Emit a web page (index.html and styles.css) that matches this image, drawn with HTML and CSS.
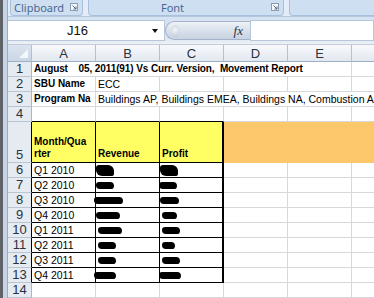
FILE: index.html
```html
<!DOCTYPE html>
<html lang="en">
<head>
    <meta charset="UTF-8">
    <title>Movement Report</title>
    <link rel="stylesheet" href="styles.css">
</head>
<body>
<div class="window">
    <div class="frame"></div>
    <div class="main">

        <!-- ribbon group labels -->
        <div class="ribbon">
            <div class="group clip">
                <span>Clipboard</span>
                <svg class="launcher" width="8" height="8" viewBox="0 0 8 8"><rect x="0.5" y="0.5" width="7" height="7" fill="#f4f7fb" stroke="#8a9cb4"/><path d="M2.5 2.5 L6 6 M6 3.5 V6 H3.5" stroke="#55677f" fill="none"/></svg>
            </div>
            <div class="group font">
                <span class="label">Font</span>
                <svg class="launcher" width="8" height="8" viewBox="0 0 8 8"><rect x="0.5" y="0.5" width="7" height="7" fill="#f4f7fb" stroke="#8a9cb4"/><path d="M2.5 2.5 L6 6 M6 3.5 V6 H3.5" stroke="#55677f" fill="none"/></svg>
            </div>
            <div class="group rest"></div>
        </div>

        <!-- name box + formula bar -->
        <div class="formula-bar">
            <div class="name-box"><span class="ref">J16</span><span class="arrow"></span></div>
            <div class="fx-pill"><span class="knob"></span><span class="fx">fx</span></div>
            <div class="formula-input"></div>
        </div>

        <!-- sheet -->
        <div class="sheet">
            <div class="h corner"></div>
            <div class="h">A</div><div class="h">B</div><div class="h">C</div><div class="h">D</div><div class="h">E</div><div class="h"></div>

            <div class="rh">1</div>
            <div class="c bold wide">August    05, 2011(91) Vs Curr. Version,  Movement Report</div>
            <div class="c"></div>

            <div class="rh">2</div>
            <div class="c bold">SBU Name</div><div class="c">ECC</div><div class="c"></div><div class="c"></div><div class="c"></div><div class="c"></div>

            <div class="rh">3</div>
            <div class="c bold">Program Na</div>
            <div class="c rest-row">Buildings AP, Buildings EMEA, Buildings NA, Combustion A</div>

            <div class="rh">4</div>
            <div class="c top"></div><div class="c top"></div><div class="c top"></div><div class="c"></div><div class="c"></div><div class="c"></div>

            <div class="rh dark">5</div>
            <div class="c box yellow bold">Month/Qua<br>rter</div>
            <div class="c box yellow bold">Revenue</div>
            <div class="c box yellow bold last">Profit</div>
            <div class="c orange"></div><div class="c orange"></div><div class="c orange"></div>

            <div class="rh dark">6</div>
            <div class="c box">Q1 2010</div>
            <div class="c box"><span class="blot m tall"></span></div>
            <div class="c box last"><span class="blot m tall"></span></div>
            <div class="c"></div><div class="c"></div><div class="c"></div>

            <div class="rh dark">7</div>
            <div class="c box">Q2 2010</div>
            <div class="c box"><span class="blot m"></span></div>
            <div class="c box last"><span class="blot m out1"></span></div>
            <div class="c"></div><div class="c"></div><div class="c"></div>

            <div class="rh dark">8</div>
            <div class="c box">Q3 2010</div>
            <div class="c box"><span class="blot xl out"></span></div>
            <div class="c box last"><span class="blot n"></span></div>
            <div class="c"></div><div class="c"></div><div class="c"></div>

            <div class="rh dark">9</div>
            <div class="c box">Q4 2010</div>
            <div class="c box"><span class="blot l"></span></div>
            <div class="c box last"><span class="blot s in"></span></div>
            <div class="c"></div><div class="c"></div><div class="c"></div>

            <div class="rh dark">10</div>
            <div class="c box">Q1 2011</div>
            <div class="c box"><span class="blot l in"></span></div>
            <div class="c box last"><span class="blot m in"></span></div>
            <div class="c"></div><div class="c"></div><div class="c"></div>

            <div class="rh dark">11</div>
            <div class="c box">Q2 2011</div>
            <div class="c box"><span class="blot m in"></span></div>
            <div class="c box last"><span class="blot xs in"></span></div>
            <div class="c"></div><div class="c"></div><div class="c"></div>

            <div class="rh dark">12</div>
            <div class="c box">Q3 2011</div>
            <div class="c box"><span class="blot m in"></span></div>
            <div class="c box last"><span class="blot m in"></span></div>
            <div class="c"></div><div class="c"></div><div class="c"></div>

            <div class="rh dark">13</div>
            <div class="c box">Q4 2011</div>
            <div class="c box"><span class="blot k out"></span></div>
            <div class="c box last"><span class="blot k out1"></span></div>
            <div class="c"></div><div class="c"></div><div class="c"></div>

            <div class="rh">14</div>
            <div class="c"></div><div class="c"></div><div class="c"></div><div class="c"></div><div class="c"></div><div class="c"></div>
        </div>
    </div>
</div>
</body>
</html>
```

FILE: styles.css
```css
* {
    box-sizing: border-box;
}
body {
    margin: 0;
    width: 374px;
    height: 298px;
    overflow: hidden;
    background: #fff;
    font-family: "Liberation Sans", Arial, sans-serif;
}
.window {
    display: flex;
    height: 298px;
}
.frame {
    width: 8px;
    flex: none;
    background: linear-gradient(to right, #5f6368 0 3px, #c6d4e6 3px 7px, #98acc4 7px 8px);
}
.main {
    flex: 1;
    min-width: 0;
    display: flex;
    flex-direction: column;
    overflow: hidden;
}

/* ribbon */
.ribbon {
    height: 17px;
    flex: none;
    display: flex;
    gap: 5px;
    padding-left: 2px;
    background: #e3ecf8;
    border-bottom: 1px solid #b4c7df;
}
.group {
    height: 16px;
    display: flex;
    align-items: center;
    padding: 0 4px 1px 3px;
    background: #cfdff2;
    border: 1px solid #a9c0dc;
    border-top: none;
    border-radius: 0 0 4px 4px;
    font: 11px "Noto Sans", sans-serif;
    color: #4a6790;
}
.clip {
    width: 73px;
    flex: none;
}
.font {
    width: 196px;
    flex: none;
}
.font .label {
    flex: 1;
    text-align: center;
    padding-right: 18px;
}
.rest {
    flex: 1;
    border-right: none;
    border-radius: 0 0 0 4px;
}
.launcher {
    margin-left: auto;
    flex: none;
}

/* formula bar */
.formula-bar {
    height: 28px;
    flex: none;
    display: flex;
    align-items: stretch;
    padding: 3px 0 3px 0;
    background: linear-gradient(#d5e2f2, #dfe7f2 80%, #eef1f5);
    border-bottom: 1px solid #c3ccd8;
}
.name-box {
    width: 157px;
    flex: none;
    display: flex;
    align-items: center;
    background: #fff;
    border: 1px solid #b7c6d8;
    border-left: none;
    font-size: 13px;
    color: #111;
}
.name-box .ref {
    margin-left: 59px;
}
.name-box .arrow {
    width: 0;
    height: 0;
    margin-left: auto;
    margin-right: 6px;
    border-left: 3.5px solid transparent;
    border-right: 3.5px solid transparent;
    border-top: 4px solid #111;
}
.fx-pill {
    width: 85px;
    flex: none;
    display: flex;
    align-items: center;
    margin: 1px 0;
    padding: 0 7px 0 5px;
    background: linear-gradient(#eef2f7, #d5deea 60%, #c8d3e1);
    border: 1px solid #a3b4c9;
    border-right: none;
    border-radius: 10px 0 0 10px;
}
.knob {
    width: 9px;
    height: 12px;
    border-radius: 50%;
    background: radial-gradient(circle at 45% 40%, #f3f5f8, #b9c4d1);
}
.fx {
    margin-left: auto;
    font: italic 13px "Liberation Serif", serif;
    color: #2c3440;
}
.formula-input {
    flex: 1;
    background: #fff;
    border: 1px solid #b7c6d8;
}

/* sheet grid */
.sheet {
    display: grid;
    grid-template-columns: 24px repeat(6, 64px);
    grid-template-rows: 17px repeat(4, 15px) 41px repeat(9, 15px);
    width: 408px;
}
.h {
    display: flex;
    align-items: center;
    justify-content: center;
    background: linear-gradient(#f7f9fc, #e2e8f0);
    border-right: 1px solid #b3c0cf;
    border-bottom: 1px solid #9fb0c4;
    font-size: 13px;
    color: #2a323d;
}
.corner {
    position: relative;
    background: linear-gradient(#dbe4ef, #cad6e5);
}
.corner::after {
    content: "";
    position: absolute;
    right: 3px;
    bottom: 3px;
    border-left: 9px solid transparent;
    border-bottom: 9px solid #f3f6fa;
}
.rh {
    display: flex;
    align-items: flex-end;
    justify-content: center;
    background: #e6ebf2;
    border-right: 1px solid #a9b7c8;
    border-bottom: 1px solid #b9c5d3;
    font-size: 13px;
    line-height: 14px;
    color: #2a323d;
}
.rh.dark {
    border-right-color: #000;
}
.c {
    display: flex;
    align-items: flex-end;
    padding: 0 2px 1px;
    border-right: 1px solid #d6d8dc;
    border-bottom: 1px solid #d6d8dc;
    font-size: 10.5px;
    line-height: 12px;
    color: #000;
    white-space: pre;
    overflow: hidden;
}
.bold {
    font-size: 10px;
    font-weight: bold;
}
.wide {
    grid-column: span 5;
    letter-spacing: -0.1px;
}
.rest-row {
    grid-column: span 5;
}
.top {
    border-bottom-color: #000;
}
.box {
    border-right-color: #000;
    border-bottom-color: #000;
}
.box.last {
    border-right-width: 2px;
}
.yellow {
    background: #ffff63;
    padding-bottom: 2px;
}
.orange {
    background: #fdc86c;
    border-color: #fdc86c;
}

/* redaction marks */
.c:has(.blot) {
    align-items: center;
    overflow: visible;
    padding: 0;
}
.blot {
    display: block;
    height: 7px;
    background: #000;
    border-radius: 4px 5px 4px 5px;
}
.blot.tall {
    height: 11px;
    border-radius: 3px 6px 2px 6px;
}
.xs { width: 13px; }
.s { width: 15px; }
.m { width: 18px; }
.n { width: 19px; }
.k { width: 22px; }
.l { width: 24px; }
.xl { width: 29px; }
.in { margin-left: 2px; }
.out { margin-left: -2px; }
.out1 { margin-left: -1px; }
```
